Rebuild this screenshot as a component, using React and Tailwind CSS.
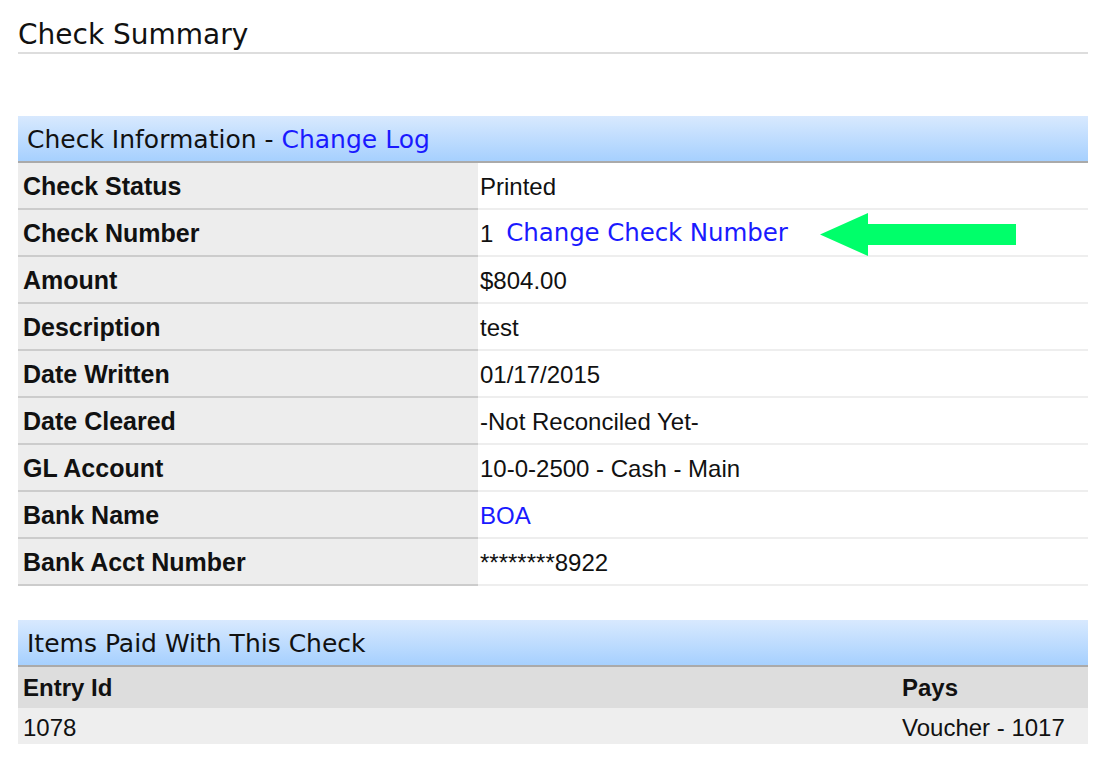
import React from "react";

const rows = [
  { label: "Check Status", value: "Printed" },
  { label: "Check Number", value: "__checknum" },
  { label: "Amount", value: "$804.00" },
  { label: "Description", value: "test" },
  { label: "Date Written", value: "01/17/2015" },
  { label: "Date Cleared", value: "-Not Reconciled Yet-" },
  { label: "GL Account", value: "10-0-2500 - Cash - Main" },
  { label: "Bank Name", value: "__boa" },
  { label: "Bank Acct Number", value: "********8922" },
];

const sans = "font-['Liberation_Sans',Arial,sans-serif]";
const deja = "font-['DejaVu_Sans',Verdana,sans-serif]";

function Arrow() {
  return (
    <svg width="196" height="43" viewBox="0 0 196 43" className="ml-[32px] mt-[2px] shrink-0">
      <polygon points="0,21.5 48,0 48,11 196,11 196,32 48,32 48,43" fill="#00ff6a" />
    </svg>
  );
}

function Value({ v }) {
  if (v === "__checknum") {
    return (
      <div className="flex items-center">
        <span className={`${sans} text-[24px] text-[#111]`}>1</span>
        <span className={`${deja} text-[24.5px] text-[#1a1aff] ml-[13px] tracking-[-0.1px]`}>Change Check Number</span>
        <Arrow />
      </div>
    );
  }
  if (v === "__boa") {
    return <span className={`${sans} text-[24px] text-[#1a1aff]`}>BOA</span>;
  }
  return <span className={`${sans} text-[24px] text-[#111]`}>{v}</span>;
}

function SectionHeader({ children }) {
  return (
    <div className="h-[47px] flex items-center pl-[9px] pt-[1px] bg-gradient-to-b from-[#d8e9fe] to-[#a6d0fe] border-b-[2px] border-[#aaaaaa]">
      <div className={`${deja} text-[25px] text-[#111] leading-none`}>{children}</div>
    </div>
  );
}

export default function App() {
  return (
    <div className="w-[1097px] h-[757px] bg-white overflow-hidden pl-[18px] pr-[9px]">
      <div className={`${deja} text-[28px] leading-[30px] text-[#111] pt-[20px] pb-[2px] border-b-[2px] border-[#dddddd]`}>
        Check Summary
      </div>

      <div className="mt-[62px]">
        <SectionHeader>
          Check Information - <span className="text-[#1a1aff]">Change Log</span>
        </SectionHeader>
        <div className="flex flex-col">
          {rows.map((r) => (
            <div key={r.label} className="flex h-[47px]">
              <div className="w-[460px] shrink-0 bg-[#ededed] border-b-[2px] border-[#cccccc] flex items-center pl-[5px] pt-[2px]">
                <span className={`${sans} font-bold text-[25px] text-[#111]`}>{r.label}</span>
              </div>
              <div className="flex-1 bg-white border-b-[2px] border-[#eeeeee] flex items-center pl-[2px] pt-[2px]">
                <Value v={r.value} />
              </div>
            </div>
          ))}
        </div>
      </div>

      <div className="mt-[34px]">
        <SectionHeader>Items Paid With This Check</SectionHeader>
        <div className="flex h-[41px] bg-[#dddddd] items-center pt-[1px]">
          <div className="w-[884px] pl-[5px]">
            <span className={`${sans} font-bold text-[24px] text-[#111]`}>Entry Id</span>
          </div>
          <div className="flex-1">
            <span className={`${sans} font-bold text-[24px] text-[#111]`}>Pays</span>
          </div>
        </div>
        <div className="flex h-[36px] bg-[#eeeeee] items-center pt-[3px]">
          <div className="w-[884px] pl-[5px]">
            <span className={`${sans} text-[24px] text-[#111]`}>1078</span>
          </div>
          <div className="flex-1">
            <span className={`${sans} text-[24px] text-[#111]`}>Voucher - 1017</span>
          </div>
        </div>
      </div>
    </div>
  );
}
